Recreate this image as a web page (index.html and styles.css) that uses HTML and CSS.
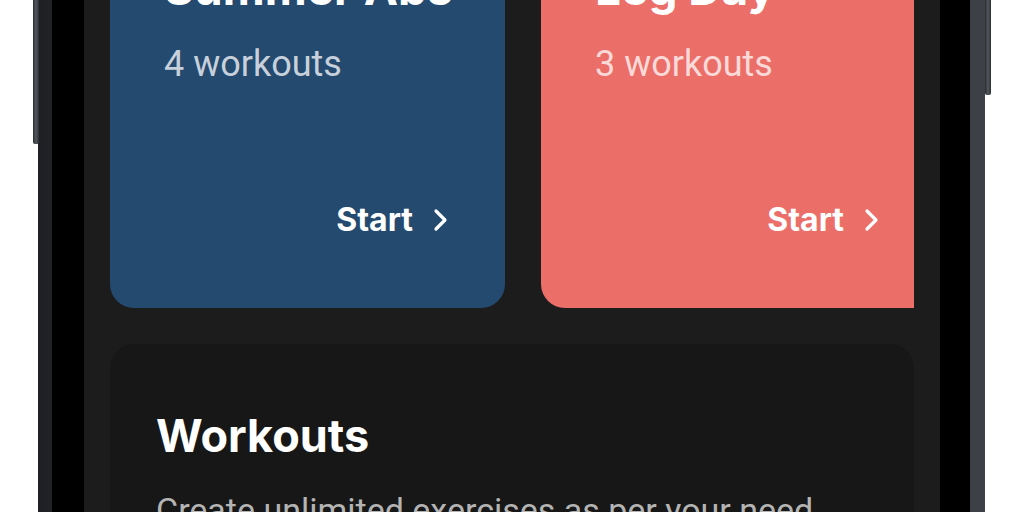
FILE: index.html
```html
<!DOCTYPE html>
<html lang="en">
<head>
  <meta charset="UTF-8" />
  <meta name="viewport" content="width=device-width, initial-scale=1.0"/>
  <title>Workouts</title>
  <link rel="stylesheet" href="styles.css">
</head>
<body>
  <div class="phone">
    <span class="side-btn left"></span>
    <span class="side-btn right"></span>
    <div class="bezel">
      <div class="screen">
        <div class="plans">
          <div class="plan blue">
            <div>
              <h3>Summer Abs</h3>
              <p>4 workouts</p>
            </div>
            <a class="start" href="#">Start
              <svg width="16" height="24" viewBox="0 0 16 24"><polyline points="3,3 12,12 3,21" fill="none" stroke="#fff" stroke-width="3.2" stroke-linecap="round" stroke-linejoin="round"/></svg>
            </a>
          </div>
          <div class="plan coral">
            <div>
              <h3>Leg Day</h3>
              <p>3 workouts</p>
            </div>
            <a class="start" href="#">Start
              <svg width="16" height="24" viewBox="0 0 16 24"><polyline points="3,3 12,12 3,21" fill="none" stroke="#fff" stroke-width="3.2" stroke-linecap="round" stroke-linejoin="round"/></svg>
            </a>
          </div>
        </div>
        <section class="panel">
          <h2>Workouts</h2>
          <p>Create unlimited exercises as per your need</p>
        </section>
      </div>
    </div>
  </div>
</body>
</html>
```

FILE: styles.css
```css
body {
  margin: 0;
  background: #ffffff;
  height: 512px;
  overflow: hidden;
  font-family: Inter, "Noto Sans", sans-serif;
}
.phone {
  position: relative;
  margin-left: 38px;
  margin-top: -120px;
  width: 918px;
  height: 900px;
  padding: 0 15px 0 14px;
  background: linear-gradient(90deg, #1e2024 0%, #4a4e54 30%, #2c2f33 60%, #3d4046 100%);
}
.side-btn {
  position: absolute;
  width: 6px;
  background: linear-gradient(90deg, #2a2d31, #55595f, #2a2d31);
  border-radius: 0 0 2px 2px;
}
.side-btn.left {
  left: -5px;
  top: 0;
  height: 264px;
}
.side-btn.right {
  right: -6px;
  top: 0;
  height: 215px;
}
.bezel {
  height: 100%;
  padding: 0 30px 0 32px;
  background: #000000;
}
.screen {
  height: 100%;
  padding: 50px 26px 0;
  background: #1c1c1c;
}
.plans {
  display: flex;
  gap: 36px;
  overflow: hidden;
}
.plan {
  flex: 0 0 395px;
  min-width: 0;
  height: 378px;
  box-sizing: border-box;
  padding: 30px 56px 70px 54px;
  border-radius: 24px;
  display: flex;
  flex-direction: column;
  justify-content: space-between;
  color: #ffffff;
}
.plan.blue {
  background: #244a70;
}
.plan.coral {
  background: #ec6e68;
}
.plan h3 {
  margin: 0;
  font-size: 46px;
  line-height: 56px;
  font-weight: 700;
  white-space: nowrap;
}
.plan p {
  margin: 27px 0 0;
  font-family: Roboto, sans-serif;
  font-size: 36px;
  line-height: 42px;
  color: rgba(255, 255, 255, 0.75);
}
.start {
  align-self: flex-end;
  display: flex;
  align-items: center;
  gap: 20px;
  color: #ffffff;
  text-decoration: none;
  font-size: 32px;
  line-height: 36px;
  font-weight: 700;
}
.panel {
  margin-top: 36px;
  padding: 64px 46px 40px;
  background: #171717;
  border-radius: 24px;
  height: 400px;
}
.panel h2 {
  margin: 0;
  color: #ffffff;
  font-size: 45px;
  line-height: 56px;
  font-weight: 700;
}
.panel p {
  margin: 24px 0 0;
  font-family: Roboto, sans-serif;
  font-size: 34px;
  line-height: 44px;
  color: #b4b4b4;
}
```
